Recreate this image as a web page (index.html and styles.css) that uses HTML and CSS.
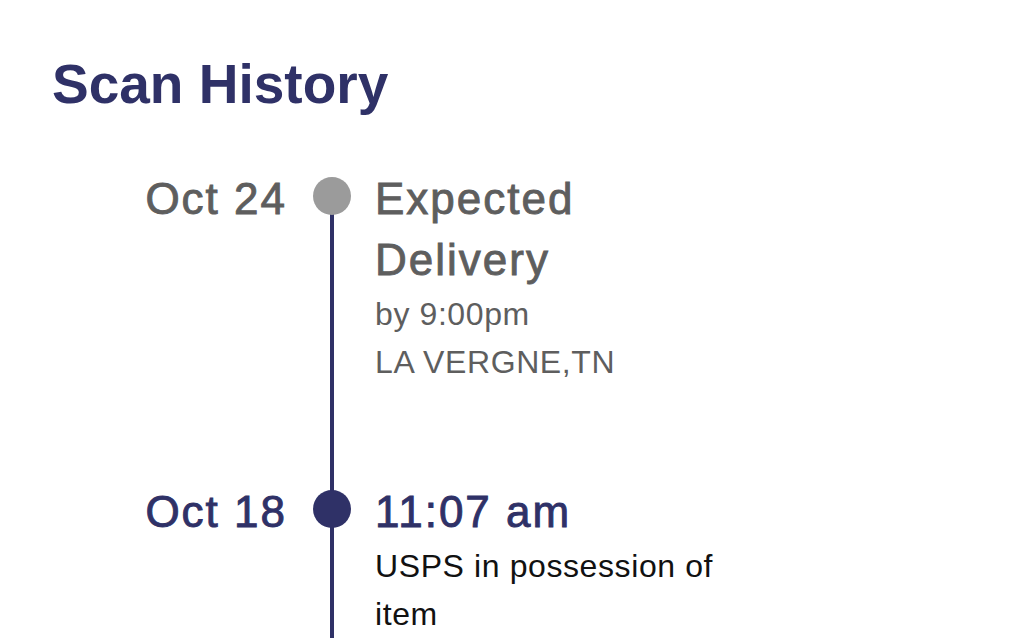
FILE: index.html
```html
<!DOCTYPE html>
<html lang="en">
<head>
  <meta charset="UTF-8">
  <meta name="viewport" content="width=device-width, initial-scale=1.0">
  <title>Scan History</title>
  <link rel="stylesheet" href="styles.css">
</head>
<body>

  <h1 class="title">Scan History</h1>

  <div class="timeline">
    <div class="date">Oct 24</div>
    <div class="rail rail-first"><span class="dot"></span></div>
    <div class="event">
      <div class="event-head">Expected Delivery</div>
      <div class="event-detail">by 9:00pm</div>
      <div class="event-detail">LA VERGNE,TN</div>
    </div>

    <div class="date current">Oct 18</div>
    <div class="rail"><span class="dot current"></span></div>
    <div class="event current last">
      <div class="event-head">11:07 am</div>
      <div class="event-detail">USPS in possession of item</div>
    </div>
  </div>

</body>
</html>
```

FILE: styles.css
```css
body {
  margin: 0;
  background-color: #fff;
  font-family: "Liberation Sans", Arial, sans-serif;
  color: #5e5e5e;
}

.title {
  margin: 57px 0 0 52px;
  font-size: 55px;
  line-height: 1;
  font-weight: bold;
  color: #2f3167;
}

.timeline {
  display: grid;
  grid-template-columns: 313px 38px 1fr;
  margin-top: 56px;
}

/* trailing letter-spacing eats 2px, so 26 + 2 = 28px to the dot */
.date {
  padding-right: 26px;
  text-align: right;
  font-size: 44px;
  line-height: 61px;
  letter-spacing: 2px;
  -webkit-text-stroke: 0.9px currentColor;
}

.rail {
  background: linear-gradient(#2f3167, #2f3167) center top / 4px 100% no-repeat;
}

.rail-first {
  background-position: center bottom;
  background-size: 4px calc(100% - 28px);
}

.dot {
  display: block;
  width: 38px;
  height: 38px;
  margin-top: 9px;
  border-radius: 50%;
  background-color: #9b9b9b;
}

.event {
  padding: 0 0 95px 24px;
  width: 360px;
}

.event.last {
  padding-bottom: 0;
}

.event-head {
  font-size: 44px;
  line-height: 61px;
  letter-spacing: 2px;
  -webkit-text-stroke: 0.9px currentColor;
}

.event-detail {
  font-size: 32px;
  line-height: 48px;
  letter-spacing: 0.6px;
}

.date.current,
.event.current .event-head {
  color: #2f3167;
}

.dot.current {
  background-color: #2f3167;
}

.event.current .event-detail {
  color: #111;
}
```
